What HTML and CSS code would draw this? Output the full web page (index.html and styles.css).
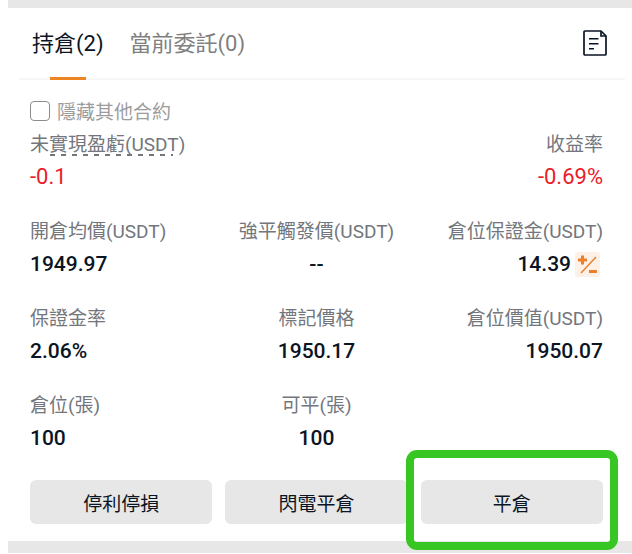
FILE: index.html
```html
<!DOCTYPE html>
<html lang="zh-Hant">
<head>
    <meta charset="UTF-8">
    <meta name="viewport" content="width=device-width, initial-scale=1.0">
    <title>持倉</title>
    <link rel="stylesheet" href="styles.css">
</head>
<body>
    <main class="panel">
        <header class="header">
            <nav class="tabs">
                <button type="button" class="tab active">持倉(2)</button>
                <button type="button" class="tab">當前委託(0)</button>
            </nav>
            <button type="button" class="icon-button" aria-label="歷史記錄">
                <svg width="24" height="26" viewBox="0 0 24 26" fill="none" stroke="#0b1423" stroke-width="2">
                    <path d="M2 1H18L23 6V24Q23 25 22 25H2Q1 25 1 24V2Q1 1 2 1Z" stroke-width="1.7" stroke-linejoin="round"/>
                    <path d="M18 1V6H23" stroke-width="1.7"/>
                    <path d="M6 8.7H15.5M6 13.7H15.5M6 18.7H11" stroke-width="1.5"/>
                </svg>
            </button>
        </header>

        <section class="position">
            <label class="hide-others">
                <input type="checkbox" class="checkbox">
                <span>隱藏其他合約</span>
            </label>

            <dl class="stats">
                <div class="stat">
                    <dt class="hint">未實現盈虧(USDT)</dt>
                    <dd class="down">-0.1</dd>
                </div>
                <div class="stat last">
                    <dt>收益率</dt>
                    <dd class="down">-0.69%</dd>
                </div>
                <div class="stat">
                    <dt>開倉均價(USDT)</dt>
                    <dd>1949.97</dd>
                </div>
                <div class="stat middle">
                    <dt>強平觸發價(USDT)</dt>
                    <dd>--</dd>
                </div>
                <div class="stat last">
                    <dt>倉位保證金(USDT)</dt>
                    <dd class="with-button">14.39
                        <button type="button" class="adjust" aria-label="調整保證金">
                            <svg width="25" height="25" viewBox="0 0 25 25" fill="none" stroke="#ec7f29">
                                <path d="M3 8H12M7.5 3.5V12.5M14 19.5H22" stroke-width="3"/>
                                <path d="M6 21L21 5" stroke-width="1.5"/>
                            </svg>
                        </button>
                    </dd>
                </div>
                <div class="stat">
                    <dt>保證金率</dt>
                    <dd>2.06%</dd>
                </div>
                <div class="stat middle">
                    <dt>標記價格</dt>
                    <dd>1950.17</dd>
                </div>
                <div class="stat last">
                    <dt>倉位價值(USDT)</dt>
                    <dd>1950.07</dd>
                </div>
                <div class="stat">
                    <dt>倉位(張)</dt>
                    <dd>100</dd>
                </div>
                <div class="stat middle">
                    <dt>可平(張)</dt>
                    <dd>100</dd>
                </div>
            </dl>

            <div class="actions">
                <button type="button" class="action">停利停損</button>
                <button type="button" class="action">閃電平倉</button>
                <div class="highlight">
                    <button type="button" class="action">平倉</button>
                </div>
            </div>
        </section>
    </main>
</body>
</html>
```

FILE: styles.css
```css
* {
    box-sizing: border-box;
}

body {
    margin: 0;
    background-color: #fff;
    color: #0b1423;
    font-family: Roboto, 'Noto Sans CJK TC', sans-serif;
    font-size: 19px;
}

button {
    border: none;
    padding: 0;
    background: none;
    color: inherit;
    font: inherit;
    cursor: pointer;
}

.panel {
    margin-left: 8px;
    border-top: 8px solid #e7e7e7;
    border-bottom: 12px solid #e7e7e7;
}

/* tabs */
.header {
    display: flex;
    justify-content: space-between;
    height: 72px;
    margin: 0 7px 0 11px;
    padding: 0 18px 0 13px;
    border-bottom: 2px solid #f6f6f6;
}

.tabs {
    display: flex;
    gap: 26px;
}

.tab {
    position: relative;
    height: 70px;
    padding-bottom: 4px;
    font-size: 22px;
    color: #808080;
}

.tab.active {
    color: #0b1423;
}

.tab.active::after {
    content: '';
    position: absolute;
    left: 50%;
    bottom: -2px;
    width: 36px;
    height: 3px;
    margin-left: -18px;
    background: #ee8525;
}

.icon-button,
.icon-button svg {
    display: block;
}

/* position details */
.position {
    padding: 15px 29px 17px 22px;
}

.hide-others {
    display: flex;
    align-items: center;
    gap: 7px;
    height: 32px;
    margin-bottom: 3px;
    color: #9c9c9c;
}

.hide-others span {
    padding-bottom: 2px;
}

.checkbox {
    appearance: none;
    width: 20px;
    height: 20px;
    margin: 0;
    border: 1px solid #8c8c8c;
    border-radius: 4px;
}

.checkbox:checked {
    background: #ee8525;
}

.stats {
    display: grid;
    grid-template-columns: repeat(3, 1fr);
    row-gap: 23px;
    margin: 0;
}

.stat {
    display: flex;
    flex-direction: column;
    align-items: flex-start;
    grid-column: 1;
    white-space: nowrap;
}

.stat.middle {
    grid-column: 2;
    align-items: center;
}

.stat.last {
    grid-column: 3;
    align-items: flex-end;
}

.stat dt {
    color: #73767c;
    line-height: 30px;
}

.stat dd {
    margin: 0;
    font-size: 21px;
    font-weight: 500;
    line-height: 34px;
}

.stat dd.down {
    color: #e9202b;
    font-size: 22px;
    font-weight: 400;
}

.hint {
    position: relative;
}

.hint::after {
    content: '';
    position: absolute;
    left: 20px;
    right: 12px;
    bottom: 4px;
    height: 2px;
    background: repeating-linear-gradient(to right, #73767c 0 5px, transparent 5px 11px);
}

.with-button {
    display: flex;
    align-items: center;
    gap: 4px;
    padding-right: 3px;
}

.adjust {
    border-radius: 3px;
    background: #fdf0e6;
}

.adjust svg {
    display: block;
}

/* buttons */
.actions {
    display: grid;
    grid-template-columns: repeat(3, 1fr);
    gap: 13px;
    margin-top: 25px;
}

.action {
    width: 100%;
    height: 44px;
    border-radius: 6px;
    background: #e7e7e7;
}

.highlight {
    position: relative;
}

.highlight::after {
    content: '';
    position: absolute;
    top: -30px;
    right: -15px;
    bottom: -26px;
    left: -15px;
    border: 8px solid #37c623;
    border-radius: 11px;
    pointer-events: none;
}
```
